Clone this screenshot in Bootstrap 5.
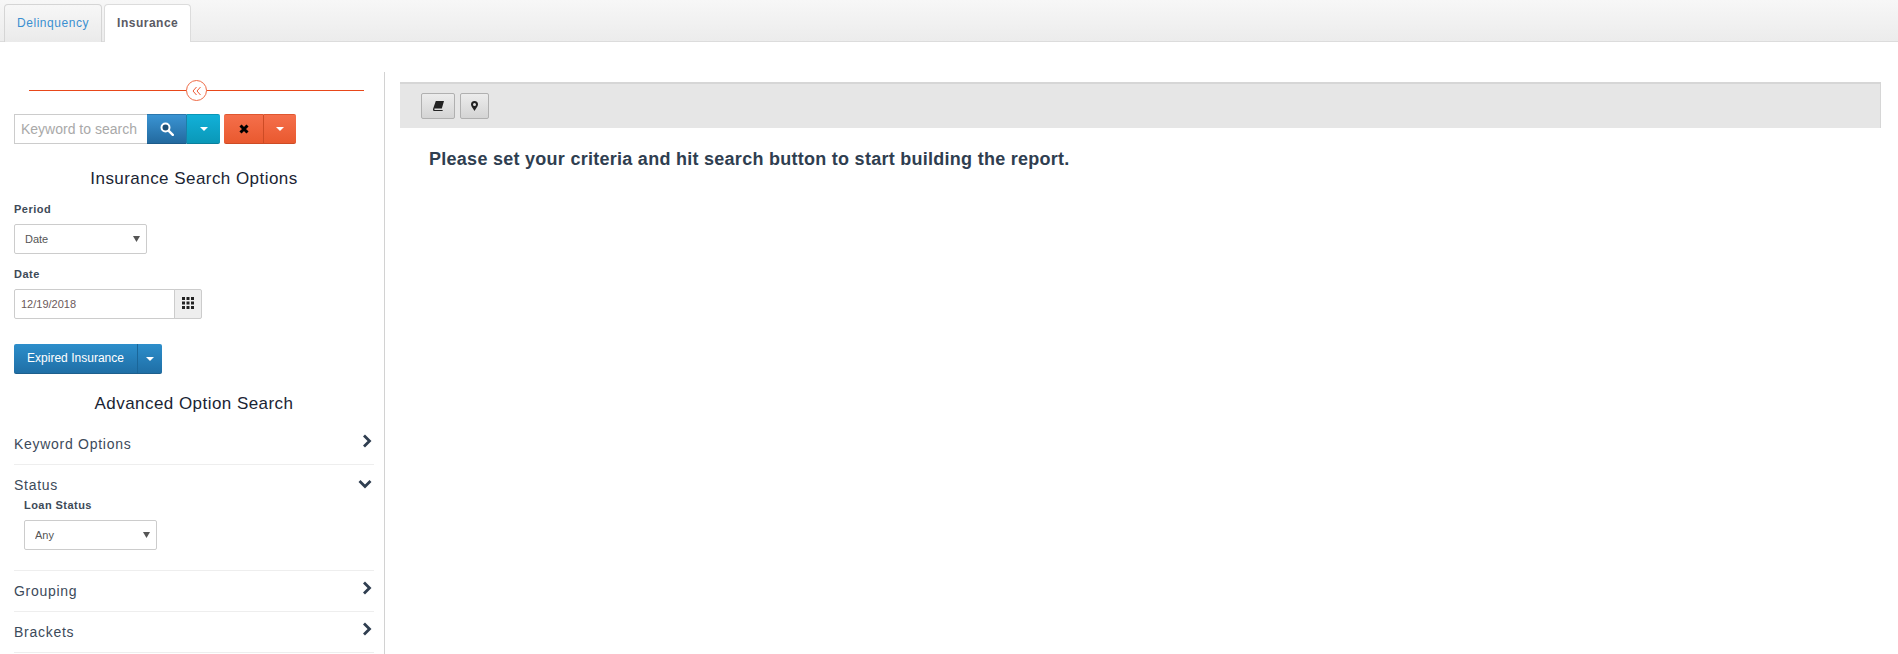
<!DOCTYPE html>
<html lang="en">
<head>
<meta charset="utf-8">
<title>Insurance</title>
<link rel="stylesheet" href="https://cdn.jsdelivr.net/npm/bootstrap@5.3.0/dist/css/bootstrap.min.css">
<style>
html,body{height:654px;overflow:hidden;}
body{font-family:"Liberation Sans",Arial,sans-serif;font-size:12px;color:#34495e;background:#fff;}
.tabbar{height:42px;background:linear-gradient(#f7f7f7,#ececec);border-bottom:1px solid #dcdcdc;padding:4px 0 0 4px;gap:2px;}
.tabbar .nav-link{height:38px;padding:0 12px;line-height:36px;font-size:12px;letter-spacing:.55px;border:1px solid #d5d5d5;border-bottom:0;border-radius:4px 4px 0 0;color:#3a8fd0;background:linear-gradient(#f7f7f7,#eaeaea);}
.tabbar .nav-link.active{color:#5a5a64;font-weight:700;background:#fff;border-color:#dcdcdc;height:38px;position:relative;z-index:1;letter-spacing:.5px;padding:0 12px;}
.side{width:385px;flex:none;height:582px;margin-top:30px;border-right:1px solid #d2d2d2;padding:0 10px 0 14px;}
.slider{height:20px;margin:9px 10px 0 15px;position:relative;}
.slider::before{content:"";position:absolute;left:0;right:0;top:9px;height:1px;background:#e8481a;}
.slidebtn{position:absolute;left:157px;top:-1px;width:21px;height:21px;border-radius:50%;border:1px solid #ee6a45;background:#fff;display:flex;align-items:center;justify-content:center;padding:0;}
.searchrow{margin-top:13px;height:30px;}
.kw{width:133px;height:30px;border:1px solid #ccc;border-right:0;border-radius:0;font-size:14px;padding:0 6px;color:#555;}
.kw::placeholder{color:#a9a9a9;opacity:1;}
.bx{height:30px;padding:0;border:0;border-radius:0;display:flex;align-items:center;justify-content:center;}
.bblue{background:linear-gradient(#3a94d3,#236a9f);border-bottom:1px solid #1d5b8a;border-top:1px solid #2a77ad;color:#fff;}
.bcyan{background:linear-gradient(#12b0d8,#0a98b8);border-left:1px solid #1c7fa7;border-bottom:1px solid #0a7f9c;border-top:1px solid #0a96b6;border-radius:0 2px 2px 0;}
.borange{background:linear-gradient(#f56f4b,#e9592f);border-top:1px solid #df5730;border-bottom:1px solid #cd4b25;}
.caretx{width:0;height:0;border-left:4px solid transparent;border-right:4px solid transparent;border-top:4px solid #fff;}
.headx{font-size:17px;line-height:20px;font-weight:400;color:#1a2433;text-align:center;letter-spacing:.45px;margin:0;}
.lab{font-size:11px;line-height:14px;font-weight:700;color:#3d4a57;letter-spacing:.5px;margin:0;display:block;}
.sel.form-select{width:133px;height:30px;font-size:11px;padding:0 0 0 10px;border:1px solid #ccc;border-radius:2px;color:#555;box-shadow:none;background-size:7px 6px;background-position:right 6px center;background-image:url("data:image/svg+xml,%3Csvg xmlns='http://www.w3.org/2000/svg' viewBox='0 0 7 6'%3E%3Cpath d='M0 0h7L3.500 6z' fill='%23555'/%3E%3C/svg%3E");}
.dategrp{width:188px;height:30px;}
.dategrp .form-control{font-size:11px;height:30px;padding:0 6px;border:1px solid #ccc;border-radius:2px 0 0 2px;color:#6b5a5a;min-height:0;}
.dategrp .input-group-text{width:28px;padding:0 0 3px;justify-content:center;background:#eee;border:1px solid #ccc;border-radius:0 2px 2px 0;margin-left:-1px;}
.expbtn{width:148px;height:30px;border-radius:2px;overflow:hidden;color:#fff;font-size:12px;background:linear-gradient(#2d8ecb,#1f6fa6);border-bottom:1px solid #1d5f8d;}
.explab{width:123px;text-align:center;line-height:29px;letter-spacing:.02px;}
.expcar{flex:1;height:30px;border-left:1px solid #1a6699;display:flex;align-items:center;justify-content:center;}
.accrow{font-size:14px;letter-spacing:.72px;color:#3c4a5a;border-bottom:1px solid #eee;}
.chev{display:block;margin-right:2px;}
.rowx{height:41px;}
.main{flex:1;padding:40px 17px 0 15px;min-width:0;}
.toolbar{height:46px;background:#e6e6e6;border-top:2px solid #d6d6d6;border-right:1px solid #d6d6d6;padding:9px 0 0 21px;gap:5px;}
.tbtn{height:26px;padding:0;border:1px solid #b0b0b0;border-radius:2px;background:linear-gradient(#ececec,#d4d4d4);display:flex;align-items:center;justify-content:center;}
.msg{font-size:18px;line-height:22px;font-weight:700;color:#2f3e50;letter-spacing:.27px;margin:20px 0 0 29px;}
</style>
</head>
<body>
<ul class="nav tabbar d-flex">
  <li class="nav-item"><a class="nav-link" href="#">Delinquency</a></li>
  <li class="nav-item"><a class="nav-link active" href="#">Insurance</a></li>
</ul>
<div class="d-flex">
  <aside class="side">
    <div class="slider"><button class="slidebtn" aria-label="Collapse"><svg width="10" height="10" viewBox="0 0 10 10" fill="none" stroke="#ee5a35" stroke-width="1"><path d="M4.500 1 1 5l3.500 4M8.500 1 5 5l3.500 4"/></svg></button></div>
    <div class="d-flex searchrow">
      <input class="form-control kw" placeholder="Keyword to search">
      <button class="bx bblue" style="width:39px" aria-label="Search"><svg width="14" height="14" viewBox="0 0 14 14"><circle cx="5.500" cy="5.500" r="4" fill="#1d4f75" stroke="#fff" stroke-width="2"/><path d="M8.800 8.800 12.800 12.800" stroke="#fff" stroke-width="2.400" stroke-linecap="round"/></svg></button>
      <button class="bx bcyan" style="width:34px" aria-label="More"><span class="caretx"></span></button>
      <button class="bx borange" style="width:39px;margin-left:4px;border-radius:2px 0 0 2px" aria-label="Clear"><svg width="10" height="10" viewBox="0 0 10 10"><path d="M1.500 1.500 8.500 8.500M8.500 1.500 1.500 8.500" stroke="#000" stroke-width="3"/></svg></button>
      <button class="bx borange" style="width:33px;border-left:1px solid #cd4b25;border-radius:0 2px 2px 0" aria-label="More"><span class="caretx"></span></button>
    </div>
    <h5 class="headx" style="margin-top:25px">Insurance Search Options</h5>
    <label class="lab" style="margin-top:13px">Period</label>
    <select class="form-select sel" style="margin-top:8px"><option>Date</option></select>
    <label class="lab" style="margin-top:13px">Date</label>
    <div class="input-group dategrp" style="margin-top:8px">
      <input class="form-control" value="12/19/2018">
      <span class="input-group-text"><svg width="12" height="12" viewBox="0 0 12 12" fill="#222"><path d="M0 0h3v3H0zM4.500 0h3v3h-3zM9 0h3v3H9zM0 4.500h3v3H0zM4.500 4.500h3v3h-3zM9 4.500h3v3H9zM0 9h3v3H0zM4.500 9h3v3h-3zM9 9h3v3H9z"/></svg></span>
    </div>
    <div class="d-flex expbtn" style="margin-top:25px">
      <span class="explab">Expired Insurance</span>
      <span class="expcar"><span class="caretx"></span></span>
    </div>
    <h5 class="headx" style="margin-top:20px">Advanced Option Search</h5>
    <div style="margin-top:10px">
      <div class="accrow rowx d-flex justify-content-between" style="padding-top:10px">
        <span>Keyword Options</span>
        <svg class="chev" width="10" height="14" viewBox="0 0 10 14" fill="none" stroke="#2f3e50" stroke-width="2.800"><path d="M2 1.500 7.500 7 2 12.500"/></svg>
      </div>
      <div class="accrow" style="height:106px;padding-top:10px">
        <div class="d-flex justify-content-between">
          <span>Status</span>
          <svg class="chev" width="14" height="10" viewBox="0 0 14 10" fill="none" stroke="#2f3e50" stroke-width="2.800" style="margin-top:4px"><path d="M1.500 2 7 7.500 12.500 2"/></svg>
        </div>
        <label class="lab" style="margin:2px 0 0 10px;letter-spacing:.45px">Loan Status</label>
        <select class="form-select sel" style="margin:8px 0 0 10px"><option>Any</option></select>
      </div>
      <div class="accrow rowx d-flex justify-content-between" style="padding-top:10px">
        <span>Grouping</span>
        <svg class="chev" width="10" height="14" viewBox="0 0 10 14" fill="none" stroke="#2f3e50" stroke-width="2.800"><path d="M2 1.500 7.500 7 2 12.500"/></svg>
      </div>
      <div class="accrow rowx d-flex justify-content-between" style="padding-top:10px">
        <span>Brackets</span>
        <svg class="chev" width="10" height="14" viewBox="0 0 10 14" fill="none" stroke="#2f3e50" stroke-width="2.800"><path d="M2 1.500 7.500 7 2 12.500"/></svg>
      </div>
    </div>
  </aside>
  <main class="main">
    <div class="toolbar d-flex">
      <button class="tbtn" style="width:34px" aria-label="Book"><svg width="11" height="10" viewBox="0 0 11 10"><path d="M2.800 0H11L8.800 7.400H2c-.6 0-.9.300-.9.700s.3.800.9.800h7.800l-.3 1.100H1.500C.4 10-.2 9 .1 7.800z" fill="#222"/></svg></button>
      <button class="tbtn" style="width:29px" aria-label="Location"><svg width="7" height="10" viewBox="0 0 7 10"><path fill-rule="evenodd" d="M3.500 0A3.500 3.500 0 0 1 7 3.500C7 5.500 4.800 7.500 3.500 10 2.200 7.500 0 5.500 0 3.500A3.500 3.500 0 0 1 3.500 0zm0 2a1.500 1.500 0 1 0 0 3 1.500 1.500 0 0 0 0-3z" fill="#222"/></svg></button>
    </div>
    <p class="msg">Please set your criteria and hit search button to start building the report.</p>
  </main>
</div>
</body>
</html>
